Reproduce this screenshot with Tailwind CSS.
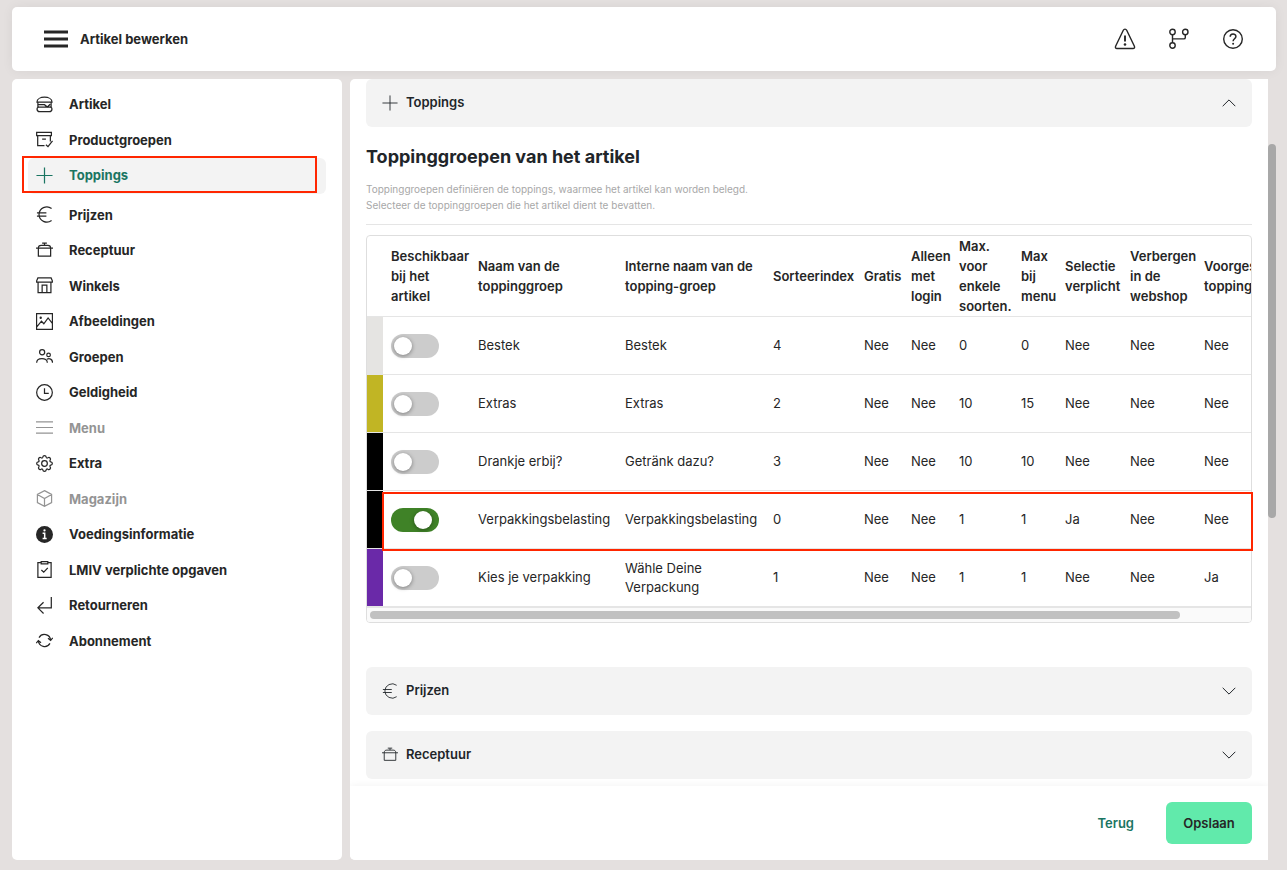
<!doctype html>
<html lang="nl">
  <head>
    <meta charset="UTF-8" />
    <meta name="viewport" content="width=device-width, initial-scale=1" />
    <title>Artikel bewerken</title>
    <script src="https://cdn.jsdelivr.net/npm/@tailwindcss/browser@4"></script>
  </head>
  <body class="flex h-screen flex-col gap-2 overflow-hidden bg-[#e4e0df] pt-[7px] pr-[11px] pb-[10px] pl-3 font-['Inter',sans-serif] text-[13px] leading-5 text-[#262626]">
    <!-- shared icons -->
    <svg class="hidden">
      <symbol id="plus" viewBox="0 0 18 18"><path d="M9 .5v17M.5 9h17" /></symbol>
      <symbol id="euro" viewBox="0 0 18 18"><path d="M16.5 2.6A8.3 8.3 0 0 0 3.2 9a8.3 8.3 0 0 0 13.3 6.4M1 7.3h10M1 10.7h10" /></symbol>
      <symbol id="pot" viewBox="0 0 18 18"><path d="M2.500 6.500v8.500h13.000v-8.500M0 6.500h18M2.500 6.500c0-2 1-3 3-3h7c2 0 3 1 3 3M9 3.500v-2M6.500 1.300h5" /></symbol>
      <symbol id="down" viewBox="0 0 14 8"><path d="M.7.8 7 7.1 13.300.8" /></symbol>
    </svg>

    <header class="flex h-16 shrink-0 items-center justify-between rounded-[5px] bg-white px-8 shadow-[0_0_12px_rgba(0,0,0,0.06)]">
      <div class="flex items-center gap-3">
        <button type="button" aria-label="Menu openen">
          <svg class="h-[18px] w-6" viewBox="0 0 24 18" fill="none" stroke="#262626" stroke-width="3"><path d="M0 2h24M0 9h24M0 16h24" /></svg>
        </button>
        <h1 class="font-bold">Artikel bewerken</h1>
      </div>
      <div class="flex items-center gap-8">
        <button type="button" aria-label="Waarschuwingen">
          <svg class="size-[22px]" viewBox="0 0 22 22" fill="none" stroke="#262626" stroke-width="1.4" stroke-linejoin="round"><path d="M9.300 2.200 1.600 18.300c-.5 1.200 0 2.200 1.400 2.200h16c1.400 0 1.900-1 1.400-2.200L12.700 2.200c-.7-1.500-2.700-1.500-3.400 0z" /><path d="M11 7.500v6" stroke-width="1.900" /><circle cx="11" cy="16.500" r="1.300" fill="#262626" stroke="none" /></svg>
        </button>
        <button type="button" aria-label="Versies">
          <svg class="size-[22px]" viewBox="0 0 22 22" fill="none" stroke="#262626" stroke-width="1.4"><circle cx="4.500" cy="4" r="2.700" /><circle cx="17.300" cy="4" r="2.700" /><circle cx="4.500" cy="17.500" r="2.700" /><path d="M4.500 6.700v8.100M4.500 10.900h11.300c1 0 1.500-.5 1.500-1.500V6.700" /></svg>
        </button>
        <button type="button" aria-label="Help">
          <svg class="size-[22px]" viewBox="0 0 22 22" fill="none" stroke="#262626" stroke-width="1.4"><circle cx="11" cy="11" r="9.300" /><path d="M8.200 8.700c0-3.600 5.700-3.500 5.700-.2 0 2.200-2.800 2.300-2.800 4.700" stroke-width="1.500" /><circle cx="11.100" cy="15.700" r="1" fill="#262626" stroke="none" /></svg>
        </button>
      </div>
    </header>

    <div class="flex min-h-0 flex-1 gap-2">
      <nav class="w-[330px] shrink-0 rounded-[5px] bg-white px-4 pt-2">
        <ul class="leading-normal font-bold [&_a]:flex [&_a]:h-full [&_a]:items-center [&_a]:gap-4 [&_a]:px-2 [&_svg]:mb-0.5 [&_svg]:size-[17px] [&_svg]:fill-none [&_svg]:stroke-current [&_svg]:stroke-[1.3px] [&>li]:odd:h-9 [&>li]:even:h-[35px]">
          <li><a href="#"><svg viewBox="0 0 18 18"><path d="M1 6.500c0-7 16-7 16 0zM1 6.500h16M2 6.500v5.300M16 6.500v5.300M2 9.200h7l3 2.500 3-3M2.800 11.800h12.400c2.400 0 2.400 4.800-1 4.800H3.800c-3.400 0-3.400-4.800-1-4.800z" /></svg>Artikel</a></li>
          <li><a href="#"><svg viewBox="0 0 18 18"><path d="M.7 1.500h15.600v3.500H.7zM1.800 5v10.500H9M15.200 5v6M6.500 8.600h4M10.500 14.500l2.200 2 4.800-6" /></svg>Productgroepen</a></li>
          <li class="relative mb-1 rounded-md bg-[#f3f3f3] text-[#1a7562]">
            <a href="#" aria-current="page"><svg><use href="#plus" /></svg>Toppings</a>
            <span class="pointer-events-none absolute -top-0.5 right-[9px] bottom-px -left-1.5 border-2 border-[#ff2600]"></span>
          </li>
          <li><a href="#"><svg><use href="#euro" /></svg>Prijzen</a></li>
          <li><a href="#"><svg><use href="#pot" /></svg>Receptuur</a></li>
          <li><a href="#"><svg viewBox="0 0 18 18"><path d="M2 1h14l1.300 3v1.500H.7V4zM2.200 5.500v11h13.600v-11M6.500 16.500V8.700h5v7.800" /></svg>Winkels</a></li>
          <li><a href="#"><svg viewBox="0 0 18 18"><path d="M.6.6h16.800v16.800H.6zM.6 15l5.200-6.300 2.500 2.700 4.500-6.200 4.700 6" /><circle cx="5" cy="5" r=".6" /></svg>Afbeeldingen</a></li>
          <li><a href="#"><svg viewBox="0 0 18 18"><circle cx="6.500" cy="4.500" r="2.700" /><circle cx="13.300" cy="7.300" r="1.900" /><path d="M.7 15.500c0-5.800 11.300-5.800 11.300 0M11.500 12c2.700-1.500 6-.2 6 3.500" /></svg>Groepen</a></li>
          <li><a href="#"><svg viewBox="0 0 18 18"><circle cx="9" cy="9" r="8.300" /><path d="M9 4.500V10h4.500" /></svg>Geldigheid</a></li>
          <li class="text-[#949494]"><a href="#"><svg viewBox="0 0 18 18"><path d="M0 3h18M0 9h18M0 15h18" /></svg>Menu</a></li>
          <li><a href="#"><svg viewBox="0 0 18 18"><circle cx="9" cy="9" r="3" /><path d="M7.200 2.300C7.500.2 10.500.2 10.800 2.300c.2 1 .9 1.200 1.700.7 1.800-1.200 3.700.7 2.500 2.500-.5.800-.3 1.500.7 1.700 2.100.3 2.100 3.300 0 3.600-1 .2-1.200.9-.7 1.700 1.200 1.800-.7 3.700-2.500 2.500-.8-.5-1.500-.3-1.700.7-.3 2.100-3.300 2.100-3.600 0-.2-1-.9-1.200-1.700-.7-1.800 1.200-3.700-.7-2.500-2.500.5-.8.3-1.500-.7-1.700-2.100-.3-2.100-3.300 0-3.600 1-.2 1.200-.9.700-1.700C1.800 3.700 3.700 1.800 5.500 3c.8.500 1.500.3 1.700-.7z" /></svg>Extra</a></li>
          <li class="text-[#949494]"><a href="#"><svg viewBox="0 0 18 18"><path d="M9 .7l7.500 4v8.600l-7.500 4-7.500-4V4.700zM1.500 4.700 9 9l7.500-4.300M9 9v8.300" /></svg>Magazijn</a></li>
          <li><a href="#"><svg viewBox="0 0 18 18"><circle cx="9" cy="9" r="9" fill="#262626" stroke="none" /><path d="M7 7.700h2.200v5.500M7 13.300h4.300" stroke="#fff" stroke-width="1.600" /><circle cx="9" cy="4.700" r="1.200" fill="#fff" stroke="none" /></svg>Voedingsinformatie</a></li>
          <li><a href="#"><svg viewBox="0 0 18 18"><path d="M5.500 1.800H2v15.600h14V1.800h-3.500M5.500.7h7v2.300h-7zM5.700 9.500l2.500 2.300 4.300-4.600" /></svg>LMIV verplichte opgaven</a></li>
          <li><a href="#"><svg viewBox="0 0 18 18"><path d="M16.200 0v11.500H2M8 5.500l-6 6 6 6" /></svg>Retourneren</a></li>
          <li><a href="#"><svg viewBox="0 0 18 18"><path d="M3.200 5.900A6.600 6.600 0 0 1 15.500 8.700M14.800 12.100A6.600 6.600 0 0 1 2.500 9.300M12.700 6.600l2.800 2.400 2.300-2.800M.2 11.800l2.300-2.800 2.800 2.400" /></svg>Abonnement</a></li>
        </ul>
      </nav>

      <div class="flex min-w-0 flex-1">
        <main class="flex min-w-0 flex-1 flex-col overflow-hidden rounded-l-[5px] bg-white">
          <div class="min-h-0 flex-1 overflow-hidden px-4">
            <button type="button" class="flex h-12 w-full items-center gap-2 rounded-md bg-[#f3f3f3] px-4 leading-normal font-semibold text-[#212529]">
              <svg class="size-4 fill-none stroke-current"><use href="#plus" /></svg>
              <span class="flex-1 text-left">Toppings</span>
              <svg class="h-2 w-[14px] rotate-180 fill-none stroke-current"><use href="#down" /></svg>
            </button>

            <section>
              <h2 class="mt-[18px] text-[18px] leading-6 font-bold text-[#212529]">Toppinggroepen van het artikel</h2>
              <p class="mt-3 border-b border-[#e5e5e5] pb-[11px] text-[10px] leading-4 text-[#a8a8a8]">
                Toppinggroepen definiëren de toppings, waarmee het artikel kan worden belegd.<br />
                Selecteer de toppinggroepen die het artikel dient te bevatten.
              </p>

              <div class="relative mt-[10px]">
                <div class="overflow-hidden rounded-[4px] border border-[#dedede]">
                  <table class="w-[962px] table-fixed text-left leading-5 [&_td]:pl-2 [&_th]:pl-2 [&_th]:font-semibold [&_tr]:border-b [&_tr]:border-[#e5e5e5]">
                    <colgroup>
                      <col class="w-4" />
                      <col class="w-[87px]" />
                      <col class="w-[147px]" />
                      <col class="w-[148px]" />
                      <col class="w-[91px]" />
                      <col class="w-[47px]" />
                      <col class="w-[48px]" />
                      <col class="w-[62px]" />
                      <col class="w-[44px]" />
                      <col class="w-[65px]" />
                      <col class="w-[74px]" />
                      <col />
                    </colgroup>
                    <thead>
                      <tr class="h-20">
                        <td></td>
                        <th scope="col">Beschikbaar<br />bij het<br />artikel</th>
                        <th scope="col">Naam van de<br />toppinggroep</th>
                        <th scope="col">Interne naam van de<br />topping-groep</th>
                        <th scope="col">Sorteerindex</th>
                        <th scope="col">Gratis</th>
                        <th scope="col">Alleen<br />met<br />login</th>
                        <th scope="col" class="py-0">Max.<br />voor<br />enkele<br />soorten.</th>
                        <th scope="col">Max<br />bij<br />menu</th>
                        <th scope="col">Selectie<br />verplicht</th>
                        <th scope="col">Verbergen<br />in de<br />webshop</th>
                        <th scope="col">Voorgeselecteerde<br />toppings</th>
                      </tr>
                    </thead>
                    <tbody id="groups" class="leading-[19px]"></tbody>
                  </table>
                  <!-- horizontal scrollbar -->
                  <div class="flex h-[15px] items-center border-t border-[#e5e5e5] bg-[#fafafa] pr-[71px] pl-[3px]">
                    <div class="h-2 flex-1 rounded-full bg-[#c1c1c1]"></div>
                  </div>
                </div>
                <div class="pointer-events-none absolute top-[257px] -right-px left-4 h-[59px] border-2 border-[#ff2600]"></div>
              </div>
            </section>

            <button type="button" class="mt-11 flex h-12 w-full items-center gap-2 rounded-md bg-[#f3f3f3] px-4 leading-normal font-semibold text-[#212529]">
              <svg class="size-4 fill-none stroke-current"><use href="#euro" /></svg>
              <span class="flex-1 text-left">Prijzen</span>
              <svg class="h-2 w-[14px] fill-none stroke-current"><use href="#down" /></svg>
            </button>
            <button type="button" class="mt-4 flex h-12 w-full items-center gap-2 rounded-md bg-[#f3f3f3] px-4 leading-normal font-semibold text-[#212529]">
              <svg class="size-4 fill-none stroke-current"><use href="#pot" /></svg>
              <span class="flex-1 text-left">Receptuur</span>
              <svg class="h-2 w-[14px] fill-none stroke-current"><use href="#down" /></svg>
            </button>
          </div>

          <footer class="flex shrink-0 items-center justify-end gap-8 bg-white p-4 font-semibold shadow-[0_0_8px_rgba(0,0,0,0.06)]">
            <button type="button" class="text-[#1a7562]">Terug</button>
            <button type="button" class="h-[42px] w-[86px] rounded-md bg-[#61eaab]">Opslaan</button>
          </footer>
        </main>
        <!-- page scrollbar -->
        <div class="w-2 shrink-0 pt-[65px]">
          <div class="h-[374px] rounded-full bg-[#a8a8a8]"></div>
        </div>
      </div>
    </div>

    <script>
      const groups = [
        { color: "#e5e4e2", on: false, cells: ["Bestek", "Bestek", "4", "Nee", "Nee", "0", "0", "Nee", "Nee", "Nee"] },
        { color: "#c1b524", on: false, cells: ["Extras", "Extras", "2", "Nee", "Nee", "10", "15", "Nee", "Nee", "Nee"] },
        { color: "#000000", on: false, cells: ["Drankje erbij?", "Getränk dazu?", "3", "Nee", "Nee", "10", "10", "Nee", "Nee", "Nee"] },
        { color: "#000000", on: true, cells: ["Verpakkingsbelasting", "Verpakkingsbelasting", "0", "Nee", "Nee", "1", "1", "Ja", "Nee", "Nee"] },
        { color: "#6a29a8", on: false, cells: ["Kies je verpakking", "Wähle Deine<br />Verpackung", "1", "Nee", "Nee", "1", "1", "Nee", "Nee", "Ja"] },
      ];

      document.getElementById("groups").innerHTML = groups
        .map(
          (g) => `
        <tr class="h-[58px]">
          <td style="background-color: ${g.color}"></td>
          <td>
            <input type="checkbox" role="switch" aria-label="${g.cells[0]}" ${g.on ? "checked" : ""}
              class="relative block h-6 w-12 appearance-none rounded-full bg-[#cccccc] before:absolute before:top-[3px] before:left-[3px] before:size-[18px] before:rounded-full before:bg-white before:shadow-[0_1px_4px_rgba(0,0,0,0.4)] checked:bg-[#3f8227] checked:before:left-[23px]" />
          </td>
          ${g.cells.map((c) => `<td>${c}</td>`).join("")}
        </tr>`
        )
        .join("");
    </script>
  </body>
</html>
